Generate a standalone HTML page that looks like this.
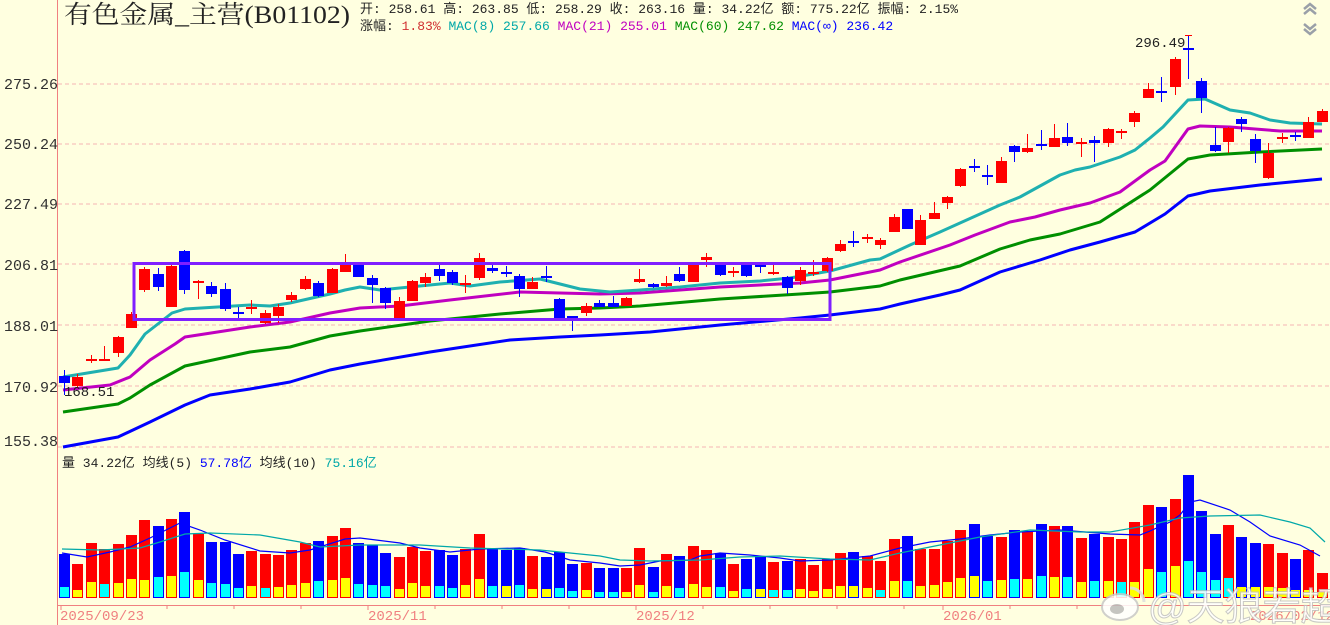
<!DOCTYPE html>
<html><head><meta charset="utf-8"><style>
html,body{margin:0;padding:0;background:#ffffe0;}
svg{display:block}
.r{fill:#ff0000}.b{fill:#0000ff}.y{fill:#ffff00}.c{fill:#00ffff}
text{font-family:"Liberation Mono","Noto Sans CJK SC",monospace}
</style></head><body>
<svg width="1330" height="625" viewBox="0 0 1330 625" xmlns="http://www.w3.org/2000/svg">
<rect width="1330" height="625" fill="#ffffe0"/>
<g stroke="#f4b4b4" stroke-dasharray="4,3" stroke-width="1">
<line x1="58" y1="84" x2="1330" y2="84"/><line x1="58" y1="144" x2="1330" y2="144"/><line x1="58" y1="204" x2="1330" y2="204"/><line x1="58" y1="264" x2="1330" y2="264"/><line x1="58" y1="325" x2="1330" y2="325"/><line x1="58" y1="386" x2="1330" y2="386"/><line x1="58" y1="447" x2="1330" y2="447"/>
</g>
<line x1="57.5" y1="0" x2="57.5" y2="625" stroke="#f08080"/>
<line x1="57" y1="605.5" x2="1330" y2="605.5" stroke="#f08080"/>
<g stroke="#f08080"><line x1="61" y1="605" x2="61" y2="610"/><line x1="167" y1="605" x2="167" y2="609"/><line x1="234" y1="605" x2="234" y2="609"/><line x1="301" y1="605" x2="301" y2="609"/><line x1="368" y1="605" x2="368" y2="610"/><line x1="435" y1="605" x2="435" y2="609"/><line x1="502" y1="605" x2="502" y2="609"/><line x1="569" y1="605" x2="569" y2="609"/><line x1="636" y1="605" x2="636" y2="610"/><line x1="703" y1="605" x2="703" y2="609"/><line x1="770" y1="605" x2="770" y2="609"/><line x1="837" y1="605" x2="837" y2="609"/><line x1="904" y1="605" x2="904" y2="609"/><line x1="943" y1="605" x2="943" y2="610"/><line x1="1010" y1="605" x2="1010" y2="609"/><line x1="1077" y1="605" x2="1077" y2="609"/><line x1="1250" y1="605" x2="1250" y2="610"/></g>
<g font-size="15" fill="#303030">
<text x="4" y="89">275.26</text><text x="4" y="149">250.24</text><text x="4" y="209">227.49</text><text x="4" y="270">206.81</text><text x="4" y="331">188.01</text><text x="4" y="392">170.92</text><text x="4" y="446">155.38</text>
</g>
<g font-size="14" fill="#f08080">
<text x="60" y="620">2025/09/23</text><text x="368" y="620">2025/11</text><text x="636" y="620">2025/12</text><text x="943" y="620">2026/01</text><text x="1250" y="620">2026/02/12</text>
</g>
<text x="64" y="23" font-size="25" fill="#222" textLength="286" lengthAdjust="spacingAndGlyphs" style="font-family:'Liberation Serif','Noto Serif CJK SC',serif">有色金属_主营(B01102)</text>
<g font-size="13">
<text x="360" y="13" fill="#222">开: 258.61 高: 263.85 低: 258.29 收: 263.16 量: 34.22亿 额: 775.22亿 振幅: 2.15%</text>
<text x="360" y="30" fill="#222">涨幅: <tspan fill="#d03030">1.83%</tspan> <tspan fill="#00a8a8">MAC(8) 257.66</tspan> <tspan fill="#c000c0">MAC(21) 255.01</tspan> <tspan fill="#008f00">MAC(60) 247.62</tspan> <tspan fill="#0000ff">MAC(∞) 236.42</tspan></text>
<text x="62" y="467" fill="#222">量 34.22亿 均线(5) <tspan fill="#0000ff">57.78亿</tspan> 均线(10) <tspan fill="#00a8a8">75.16亿</tspan></text>
</g>
<g fill="none" stroke="#9aa0a8" stroke-width="2.5">
<path d="M1304 9l6-5 6 5M1304 14l6-5 6 5"/><path d="M1304 24l6 5 6-5M1304 29l6 5 6-5"/>
</g>
<g fill="none" stroke-width="3" stroke-linejoin="round">
<polyline stroke="#0000ff" points="63,447 118,437 150,422 185,405 210,395 250,389 290,382 330,370 360,364 430,352 510,340 560,337 600,335 650,332 720,325 800,318 830,315 880,309 900,304 940,295 960,290 1000,272 1040,260 1070,250 1100,242 1135,232 1165,214 1188,196 1210,191 1260,185 1322,179"/>
<polyline stroke="#008f00" points="63,412 118,404 130,398 150,385 185,366 250,352 290,347 330,336 360,331 430,321 500,314 560,309 600,308 640,306 720,299 800,294 830,292 880,286 900,280 960,266 1000,249 1030,240 1060,234 1100,222 1150,190 1188,159 1210,155 1260,152 1322,149"/>
<polyline stroke="#c000c0" points="63,390 110,385 130,377 150,360 175,344 185,337 250,327 290,322 330,313 360,308 400,306 450,300 520,292 560,293 600,294 640,293 680,290 720,287 800,283 830,280 880,270 900,262 950,245 975,235 1010,222 1035,217 1060,210 1090,203 1120,192 1150,170 1165,161 1188,129 1200,126 1230,127 1255,129 1280,131 1322,131"/>
<polyline stroke="#1fb0b0" points="63,377 118,368 130,355 145,334 172,313 185,309 250,305 270,306 290,303 330,294 345,290 360,287 380,290 450,283 470,286 500,282 540,279 560,284 580,289 610,292 640,290 680,287 720,283 760,281 790,278 830,271 870,260 880,259 910,245 940,232 980,214 1000,205 1020,197 1060,175 1075,170 1090,167 1120,157 1135,150 1150,138 1163,127 1188,100 1205,99 1230,110 1250,113 1270,120 1290,123 1322,124"/>
</g>
<g>
<rect class="b" x="64" y="370" width="1" height="25"/><rect class="b" x="59" y="376" width="11" height="7"/>
<rect class="r" x="77" y="374" width="1" height="14"/><rect class="r" x="72" y="377" width="11" height="9"/>
<rect class="r" x="91" y="355" width="1" height="8"/><rect class="r" x="86" y="359" width="11" height="2"/>
<rect class="r" x="104" y="346" width="1" height="15"/><rect class="r" x="99" y="359" width="11" height="2"/>
<rect class="r" x="118" y="336" width="1" height="21"/><rect class="r" x="113" y="337" width="11" height="16"/>
<rect class="r" x="131" y="312" width="1" height="16"/><rect class="r" x="126" y="314" width="11" height="14"/>
<rect class="r" x="144" y="267" width="1" height="25"/><rect class="r" x="139" y="269" width="11" height="21"/>
<rect class="b" x="158" y="268" width="1" height="23"/><rect class="b" x="153" y="274" width="11" height="13"/>
<rect class="r" x="171" y="265" width="1" height="42"/><rect class="r" x="166" y="266" width="11" height="41"/>
<rect class="b" x="184" y="250" width="1" height="44"/><rect class="b" x="179" y="251" width="11" height="39"/>
<rect class="r" x="198" y="280" width="1" height="19"/><rect class="r" x="193" y="281" width="11" height="2"/>
<rect class="b" x="211" y="282" width="1" height="15"/><rect class="b" x="206" y="286" width="11" height="8"/>
<rect class="b" x="225" y="283" width="1" height="28"/><rect class="b" x="220" y="289" width="11" height="20"/>
<rect class="b" x="238" y="307" width="1" height="11"/><rect class="b" x="233" y="312" width="11" height="2"/>
<rect class="r" x="251" y="300" width="1" height="14"/><rect class="r" x="246" y="307" width="11" height="2"/>
<rect class="r" x="265" y="310" width="1" height="14"/><rect class="r" x="260" y="313" width="11" height="10"/>
<rect class="r" x="278" y="304" width="1" height="19"/><rect class="r" x="273" y="307" width="11" height="9"/>
<rect class="r" x="291" y="292" width="1" height="10"/><rect class="r" x="286" y="295" width="11" height="5"/>
<rect class="r" x="305" y="276" width="1" height="14"/><rect class="r" x="300" y="279" width="11" height="10"/>
<rect class="b" x="318" y="281" width="1" height="16"/><rect class="b" x="313" y="283" width="11" height="13"/>
<rect class="r" x="332" y="268" width="1" height="25"/><rect class="r" x="327" y="269" width="11" height="24"/>
<rect class="r" x="345" y="254" width="1" height="18"/><rect class="r" x="340" y="263" width="11" height="9"/>
<rect class="b" x="358" y="263" width="1" height="14"/><rect class="b" x="353" y="265" width="11" height="12"/>
<rect class="b" x="372" y="275" width="1" height="28"/><rect class="b" x="367" y="278" width="11" height="7"/>
<rect class="b" x="385" y="287" width="1" height="22"/><rect class="b" x="380" y="288" width="11" height="15"/>
<rect class="r" x="399" y="297" width="1" height="21"/><rect class="r" x="394" y="301" width="11" height="17"/>
<rect class="r" x="412" y="280" width="1" height="21"/><rect class="r" x="407" y="281" width="11" height="20"/>
<rect class="r" x="425" y="273" width="1" height="14"/><rect class="r" x="420" y="277" width="11" height="6"/>
<rect class="b" x="439" y="263" width="1" height="18"/><rect class="b" x="434" y="269" width="11" height="7"/>
<rect class="b" x="452" y="270" width="1" height="15"/><rect class="b" x="447" y="272" width="11" height="11"/>
<rect class="r" x="465" y="275" width="1" height="18"/><rect class="r" x="460" y="283" width="11" height="2"/>
<rect class="r" x="479" y="253" width="1" height="27"/><rect class="r" x="474" y="258" width="11" height="20"/>
<rect class="b" x="492" y="264" width="1" height="9"/><rect class="b" x="487" y="268" width="11" height="3"/>
<rect class="b" x="506" y="266" width="1" height="11"/><rect class="b" x="501" y="272" width="11" height="2"/>
<rect class="b" x="519" y="274" width="1" height="23"/><rect class="b" x="514" y="276" width="11" height="13"/>
<rect class="r" x="532" y="277" width="1" height="12"/><rect class="r" x="527" y="282" width="11" height="7"/>
<rect class="b" x="546" y="266" width="1" height="16"/><rect class="b" x="541" y="276" width="11" height="2"/>
<rect class="b" x="559" y="298" width="1" height="20"/><rect class="b" x="554" y="299" width="11" height="19"/>
<rect class="b" x="572" y="316" width="1" height="15"/><rect class="b" x="567" y="316" width="11" height="3"/>
<rect class="r" x="586" y="303" width="1" height="13"/><rect class="r" x="581" y="306" width="11" height="7"/>
<rect class="b" x="599" y="300" width="1" height="7"/><rect class="b" x="594" y="303" width="11" height="4"/>
<rect class="b" x="613" y="296" width="1" height="11"/><rect class="b" x="608" y="303" width="11" height="4"/>
<rect class="r" x="626" y="297" width="1" height="9"/><rect class="r" x="621" y="298" width="11" height="8"/>
<rect class="r" x="639" y="269" width="1" height="14"/><rect class="r" x="634" y="279" width="11" height="3"/>
<rect class="b" x="653" y="283" width="1" height="5"/><rect class="b" x="648" y="284" width="11" height="3"/>
<rect class="r" x="666" y="276" width="1" height="11"/><rect class="r" x="661" y="283" width="11" height="3"/>
<rect class="b" x="679" y="267" width="1" height="15"/><rect class="b" x="674" y="274" width="11" height="7"/>
<rect class="r" x="693" y="263" width="1" height="19"/><rect class="r" x="688" y="264" width="11" height="18"/>
<rect class="r" x="706" y="253" width="1" height="14"/><rect class="r" x="701" y="257" width="11" height="3"/>
<rect class="b" x="720" y="263" width="1" height="13"/><rect class="b" x="715" y="264" width="11" height="11"/>
<rect class="r" x="733" y="267" width="1" height="10"/><rect class="r" x="728" y="271" width="11" height="2"/>
<rect class="b" x="746" y="263" width="1" height="14"/><rect class="b" x="741" y="265" width="11" height="11"/>
<rect class="b" x="760" y="263" width="1" height="10"/><rect class="b" x="755" y="265" width="11" height="2"/>
<rect class="r" x="773" y="263" width="1" height="12"/><rect class="r" x="768" y="272" width="11" height="2"/>
<rect class="b" x="787" y="276" width="1" height="18"/><rect class="b" x="782" y="277" width="11" height="11"/>
<rect class="r" x="800" y="267" width="1" height="18"/><rect class="r" x="795" y="270" width="11" height="11"/>
<rect class="r" x="813" y="260" width="1" height="16"/><rect class="r" x="808" y="272" width="11" height="2"/>
<rect class="r" x="827" y="257" width="1" height="15"/><rect class="r" x="822" y="258" width="11" height="13"/>
<rect class="r" x="840" y="240" width="1" height="12"/><rect class="r" x="835" y="244" width="11" height="7"/>
<rect class="b" x="853" y="231" width="1" height="16"/><rect class="b" x="848" y="241" width="11" height="2"/>
<rect class="r" x="867" y="234" width="1" height="9"/><rect class="r" x="862" y="237" width="11" height="2"/>
<rect class="r" x="880" y="238" width="1" height="11"/><rect class="r" x="875" y="240" width="11" height="5"/>
<rect class="r" x="894" y="214" width="1" height="18"/><rect class="r" x="889" y="217" width="11" height="15"/>
<rect class="b" x="907" y="209" width="1" height="20"/><rect class="b" x="902" y="209" width="11" height="20"/>
<rect class="r" x="920" y="215" width="1" height="30"/><rect class="r" x="915" y="220" width="11" height="25"/>
<rect class="r" x="934" y="202" width="1" height="17"/><rect class="r" x="929" y="213" width="11" height="6"/>
<rect class="r" x="947" y="196" width="1" height="13"/><rect class="r" x="942" y="197" width="11" height="6"/>
<rect class="r" x="960" y="168" width="1" height="19"/><rect class="r" x="955" y="169" width="11" height="17"/>
<rect class="b" x="974" y="159" width="1" height="13"/><rect class="b" x="969" y="166" width="11" height="2"/>
<rect class="b" x="987" y="165" width="1" height="20"/><rect class="b" x="982" y="175" width="11" height="2"/>
<rect class="r" x="1001" y="157" width="1" height="26"/><rect class="r" x="996" y="161" width="11" height="22"/>
<rect class="b" x="1014" y="145" width="1" height="17"/><rect class="b" x="1009" y="146" width="11" height="6"/>
<rect class="r" x="1027" y="134" width="1" height="19"/><rect class="r" x="1022" y="148" width="11" height="4"/>
<rect class="b" x="1041" y="130" width="1" height="20"/><rect class="b" x="1036" y="144" width="11" height="2"/>
<rect class="r" x="1054" y="124" width="1" height="23"/><rect class="r" x="1049" y="138" width="11" height="9"/>
<rect class="b" x="1067" y="123" width="1" height="23"/><rect class="b" x="1062" y="137" width="11" height="6"/>
<rect class="r" x="1081" y="138" width="1" height="19"/><rect class="r" x="1076" y="142" width="11" height="2"/>
<rect class="b" x="1094" y="136" width="1" height="26"/><rect class="b" x="1089" y="140" width="11" height="3"/>
<rect class="r" x="1108" y="128" width="1" height="19"/><rect class="r" x="1103" y="129" width="11" height="14"/>
<rect class="r" x="1121" y="129" width="1" height="10"/><rect class="r" x="1116" y="131" width="11" height="2"/>
<rect class="r" x="1134" y="111" width="1" height="16"/><rect class="r" x="1129" y="113" width="11" height="9"/>
<rect class="r" x="1148" y="83" width="1" height="15"/><rect class="r" x="1143" y="89" width="11" height="9"/>
<rect class="b" x="1161" y="77" width="1" height="25"/><rect class="b" x="1156" y="91" width="11" height="2"/>
<rect class="r" x="1175" y="57" width="1" height="38"/><rect class="r" x="1170" y="59" width="11" height="28"/>
<rect class="b" x="1188" y="35" width="1" height="44"/><rect class="b" x="1183" y="48" width="11" height="2"/>
<rect class="r" x="1185" y="35" width="7" height="1"/>
<rect class="b" x="1201" y="78" width="1" height="35"/><rect class="b" x="1196" y="81" width="11" height="17"/>
<rect class="b" x="1215" y="127" width="1" height="25"/><rect class="b" x="1210" y="145" width="11" height="6"/>
<rect class="r" x="1228" y="127" width="1" height="26"/><rect class="r" x="1223" y="128" width="11" height="14"/>
<rect class="b" x="1241" y="117" width="1" height="15"/><rect class="b" x="1236" y="119" width="11" height="5"/>
<rect class="b" x="1255" y="134" width="1" height="29"/><rect class="b" x="1250" y="139" width="11" height="12"/>
<rect class="r" x="1268" y="143" width="1" height="36"/><rect class="r" x="1263" y="153" width="11" height="25"/>
<rect class="r" x="1282" y="133" width="1" height="10"/><rect class="r" x="1277" y="137" width="11" height="2"/>
<rect class="b" x="1295" y="132" width="1" height="9"/><rect class="b" x="1290" y="135" width="11" height="2"/>
<rect class="r" x="1308" y="117" width="1" height="21"/><rect class="r" x="1303" y="122" width="11" height="16"/>
<rect class="r" x="1322" y="109" width="1" height="13"/><rect class="r" x="1317" y="111" width="11" height="11"/>
</g>
<text x="1135" y="47" font-size="14" fill="#222">296.49</text>
<text x="64" y="396" font-size="14" fill="#222">168.51</text>
<rect x="134" y="263.5" width="696" height="56" fill="none" stroke="#7f1fff" stroke-width="3"/>
<g>
<rect class="b" x="59" y="554" width="11" height="44"/><rect class="c" x="60" y="587" width="9" height="10"/>
<rect class="r" x="72" y="564" width="11" height="34"/><rect class="y" x="73" y="590" width="9" height="7"/>
<rect class="r" x="86" y="543" width="11" height="55"/><rect class="y" x="87" y="582" width="9" height="15"/>
<rect class="r" x="99" y="549" width="11" height="49"/><rect class="c" x="100" y="584" width="9" height="13"/>
<rect class="r" x="113" y="544" width="11" height="54"/><rect class="y" x="114" y="583" width="9" height="14"/>
<rect class="r" x="126" y="535" width="11" height="63"/><rect class="y" x="127" y="579" width="9" height="18"/>
<rect class="r" x="139" y="520" width="11" height="78"/><rect class="y" x="140" y="580" width="9" height="17"/>
<rect class="b" x="153" y="526" width="11" height="72"/><rect class="c" x="154" y="577" width="9" height="20"/>
<rect class="r" x="166" y="519" width="11" height="79"/><rect class="y" x="167" y="576" width="9" height="21"/>
<rect class="b" x="179" y="512" width="11" height="86"/><rect class="c" x="180" y="572" width="9" height="25"/>
<rect class="r" x="193" y="534" width="11" height="64"/><rect class="y" x="194" y="580" width="9" height="17"/>
<rect class="b" x="206" y="542" width="11" height="56"/><rect class="c" x="207" y="583" width="9" height="14"/>
<rect class="b" x="220" y="542" width="11" height="56"/><rect class="c" x="221" y="584" width="9" height="13"/>
<rect class="b" x="233" y="554" width="11" height="44"/><rect class="c" x="234" y="588" width="9" height="9"/>
<rect class="r" x="246" y="551" width="11" height="47"/><rect class="y" x="247" y="586" width="9" height="11"/>
<rect class="r" x="260" y="554" width="11" height="44"/><rect class="c" x="261" y="588" width="9" height="9"/>
<rect class="r" x="273" y="555" width="11" height="43"/><rect class="y" x="274" y="587" width="9" height="10"/>
<rect class="r" x="286" y="550" width="11" height="48"/><rect class="y" x="287" y="585" width="9" height="12"/>
<rect class="r" x="300" y="543" width="11" height="55"/><rect class="y" x="301" y="583" width="9" height="14"/>
<rect class="b" x="313" y="541" width="11" height="57"/><rect class="c" x="314" y="581" width="9" height="16"/>
<rect class="r" x="327" y="536" width="11" height="62"/><rect class="y" x="328" y="580" width="9" height="17"/>
<rect class="r" x="340" y="528" width="11" height="70"/><rect class="y" x="341" y="578" width="9" height="19"/>
<rect class="b" x="353" y="543" width="11" height="55"/><rect class="c" x="354" y="584" width="9" height="13"/>
<rect class="b" x="367" y="545" width="11" height="53"/><rect class="c" x="368" y="585" width="9" height="12"/>
<rect class="b" x="380" y="553" width="11" height="45"/><rect class="c" x="381" y="586" width="9" height="11"/>
<rect class="r" x="394" y="557" width="11" height="41"/><rect class="y" x="395" y="589" width="9" height="8"/>
<rect class="r" x="407" y="547" width="11" height="51"/><rect class="y" x="408" y="583" width="9" height="14"/>
<rect class="r" x="420" y="551" width="11" height="47"/><rect class="y" x="421" y="586" width="9" height="11"/>
<rect class="b" x="434" y="550" width="11" height="48"/><rect class="c" x="435" y="586" width="9" height="11"/>
<rect class="b" x="447" y="555" width="11" height="43"/><rect class="c" x="448" y="588" width="9" height="9"/>
<rect class="r" x="460" y="549" width="11" height="49"/><rect class="y" x="461" y="585" width="9" height="12"/>
<rect class="r" x="474" y="534" width="11" height="64"/><rect class="y" x="475" y="579" width="9" height="18"/>
<rect class="b" x="487" y="548" width="11" height="50"/><rect class="c" x="488" y="586" width="9" height="11"/>
<rect class="b" x="501" y="550" width="11" height="48"/><rect class="y" x="502" y="586" width="9" height="11"/>
<rect class="b" x="514" y="548" width="11" height="50"/><rect class="c" x="515" y="585" width="9" height="12"/>
<rect class="r" x="527" y="556" width="11" height="42"/><rect class="y" x="528" y="589" width="9" height="8"/>
<rect class="b" x="541" y="557" width="11" height="41"/><rect class="y" x="542" y="589" width="9" height="8"/>
<rect class="b" x="554" y="552" width="11" height="46"/><rect class="c" x="555" y="588" width="9" height="9"/>
<rect class="b" x="567" y="564" width="11" height="34"/><rect class="c" x="568" y="591" width="9" height="6"/>
<rect class="r" x="581" y="563" width="11" height="35"/><rect class="y" x="582" y="590" width="9" height="7"/>
<rect class="b" x="594" y="568" width="11" height="30"/><rect class="c" x="595" y="592" width="9" height="5"/>
<rect class="b" x="608" y="568" width="11" height="30"/><rect class="c" x="609" y="592" width="9" height="5"/>
<rect class="r" x="621" y="568" width="11" height="30"/><rect class="y" x="622" y="592" width="9" height="5"/>
<rect class="r" x="634" y="548" width="11" height="50"/><rect class="y" x="635" y="585" width="9" height="12"/>
<rect class="b" x="648" y="567" width="11" height="31"/><rect class="c" x="649" y="592" width="9" height="5"/>
<rect class="r" x="661" y="554" width="11" height="44"/><rect class="y" x="662" y="586" width="9" height="11"/>
<rect class="b" x="674" y="556" width="11" height="42"/><rect class="c" x="675" y="588" width="9" height="9"/>
<rect class="r" x="688" y="546" width="11" height="52"/><rect class="y" x="689" y="584" width="9" height="13"/>
<rect class="r" x="701" y="550" width="11" height="48"/><rect class="y" x="702" y="587" width="9" height="10"/>
<rect class="b" x="715" y="553" width="11" height="45"/><rect class="c" x="716" y="587" width="9" height="10"/>
<rect class="r" x="728" y="564" width="11" height="34"/><rect class="y" x="729" y="591" width="9" height="6"/>
<rect class="b" x="741" y="559" width="11" height="39"/><rect class="c" x="742" y="589" width="9" height="8"/>
<rect class="b" x="755" y="556" width="11" height="42"/><rect class="y" x="756" y="589" width="9" height="8"/>
<rect class="r" x="768" y="562" width="11" height="36"/><rect class="c" x="769" y="590" width="9" height="7"/>
<rect class="b" x="782" y="561" width="11" height="37"/><rect class="c" x="783" y="590" width="9" height="7"/>
<rect class="r" x="795" y="559" width="11" height="39"/><rect class="y" x="796" y="589" width="9" height="8"/>
<rect class="r" x="808" y="565" width="11" height="33"/><rect class="y" x="809" y="591" width="9" height="6"/>
<rect class="r" x="822" y="559" width="11" height="39"/><rect class="y" x="823" y="589" width="9" height="8"/>
<rect class="r" x="835" y="553" width="11" height="45"/><rect class="y" x="836" y="586" width="9" height="11"/>
<rect class="b" x="848" y="552" width="11" height="46"/><rect class="y" x="849" y="586" width="9" height="11"/>
<rect class="r" x="862" y="556" width="11" height="42"/><rect class="y" x="863" y="588" width="9" height="9"/>
<rect class="r" x="875" y="561" width="11" height="37"/><rect class="c" x="876" y="590" width="9" height="7"/>
<rect class="r" x="889" y="539" width="11" height="59"/><rect class="y" x="890" y="581" width="9" height="16"/>
<rect class="b" x="902" y="536" width="11" height="62"/><rect class="c" x="903" y="581" width="9" height="16"/>
<rect class="r" x="915" y="549" width="11" height="49"/><rect class="y" x="916" y="586" width="9" height="11"/>
<rect class="r" x="929" y="549" width="11" height="49"/><rect class="y" x="930" y="585" width="9" height="12"/>
<rect class="r" x="942" y="541" width="11" height="57"/><rect class="y" x="943" y="582" width="9" height="15"/>
<rect class="r" x="955" y="530" width="11" height="68"/><rect class="y" x="956" y="578" width="9" height="19"/>
<rect class="b" x="969" y="524" width="11" height="74"/><rect class="y" x="970" y="576" width="9" height="21"/>
<rect class="b" x="982" y="536" width="11" height="62"/><rect class="c" x="983" y="581" width="9" height="16"/>
<rect class="r" x="996" y="537" width="11" height="61"/><rect class="y" x="997" y="580" width="9" height="17"/>
<rect class="b" x="1009" y="530" width="11" height="68"/><rect class="c" x="1010" y="579" width="9" height="18"/>
<rect class="r" x="1022" y="531" width="11" height="67"/><rect class="y" x="1023" y="579" width="9" height="18"/>
<rect class="b" x="1036" y="524" width="11" height="74"/><rect class="c" x="1037" y="576" width="9" height="21"/>
<rect class="r" x="1049" y="526" width="11" height="72"/><rect class="y" x="1050" y="577" width="9" height="20"/>
<rect class="b" x="1062" y="526" width="11" height="72"/><rect class="c" x="1063" y="577" width="9" height="20"/>
<rect class="r" x="1076" y="538" width="11" height="60"/><rect class="y" x="1077" y="582" width="9" height="15"/>
<rect class="b" x="1089" y="534" width="11" height="64"/><rect class="c" x="1090" y="581" width="9" height="16"/>
<rect class="r" x="1103" y="537" width="11" height="61"/><rect class="y" x="1104" y="581" width="9" height="16"/>
<rect class="r" x="1116" y="539" width="11" height="59"/><rect class="c" x="1117" y="582" width="9" height="15"/>
<rect class="r" x="1129" y="522" width="11" height="76"/><rect class="y" x="1130" y="582" width="9" height="15"/>
<rect class="r" x="1143" y="505" width="11" height="93"/><rect class="y" x="1144" y="569" width="9" height="28"/>
<rect class="b" x="1156" y="507" width="11" height="91"/><rect class="c" x="1157" y="572" width="9" height="25"/>
<rect class="r" x="1170" y="499" width="11" height="99"/><rect class="y" x="1171" y="566" width="9" height="31"/>
<rect class="b" x="1183" y="475" width="11" height="123"/><rect class="c" x="1184" y="561" width="9" height="36"/>
<rect class="b" x="1196" y="511" width="11" height="87"/><rect class="c" x="1197" y="572" width="9" height="25"/>
<rect class="b" x="1210" y="534" width="11" height="64"/><rect class="c" x="1211" y="580" width="9" height="17"/>
<rect class="r" x="1223" y="525" width="11" height="73"/><rect class="c" x="1224" y="578" width="9" height="19"/>
<rect class="b" x="1236" y="537" width="11" height="61"/><rect class="y" x="1237" y="587" width="9" height="10"/>
<rect class="b" x="1250" y="543" width="11" height="55"/><rect class="y" x="1251" y="587" width="9" height="10"/>
<rect class="r" x="1263" y="544" width="11" height="54"/><rect class="y" x="1264" y="587" width="9" height="10"/>
<rect class="r" x="1277" y="553" width="11" height="45"/><rect class="y" x="1278" y="588" width="9" height="9"/>
<rect class="b" x="1290" y="559" width="11" height="39"/><rect class="y" x="1291" y="590" width="9" height="7"/>
<rect class="r" x="1303" y="550" width="11" height="48"/><rect class="y" x="1304" y="590" width="9" height="7"/>
<rect class="r" x="1317" y="573" width="11" height="25"/><rect class="y" x="1318" y="592" width="9" height="5"/>
</g>
<g fill="none" stroke-width="1.2">
<polyline stroke="#0000ff" points="62,553 87,557 110,552 130,547 150,538 172,527 180,523 200,530 225,540 260,551 290,553 310,550 345,539 360,538 400,543 420,548 450,552 480,549 520,548 545,552 570,560 600,563 620,566 640,565 660,561 690,560 700,556 720,553 750,555 780,558 800,561 830,560 870,556 900,548 930,542 960,539 990,535 1020,532 1060,530 1110,534 1140,535 1150,531 1170,522 1180,515 1190,502 1200,500 1230,510 1250,522 1270,536 1300,545 1320,556"/>
<polyline stroke="#00a8a8" points="62,549 100,550 140,548 160,542 185,534 210,533 260,535 300,542 320,547 360,545 420,545 470,548 540,550 570,553 600,556 620,560 650,561 700,560 740,557 780,556 830,559 870,560 900,553 940,545 980,537 1030,530 1080,532 1110,532 1150,525 1180,518 1210,516 1260,515 1290,522 1310,528 1325,542"/>
</g>
<g opacity="0.85">
<ellipse cx="1120" cy="607" rx="18" ry="13" fill="#fff" stroke="#c8c8c8" stroke-width="2"/>
<ellipse cx="1117" cy="609" rx="7" ry="5" fill="#bbb"/>
<path d="M1130 588a14 14 0 0 1 14 14" fill="none" stroke="#ddd" stroke-width="3"/>
<text x="1148" y="620" font-size="38" fill="#ffffff" stroke="#c0c0c0" stroke-width="1" style="font-family:'Liberation Sans','Noto Sans CJK SC',sans-serif">@天狼若超</text>
</g>
</svg>
</body></html>
